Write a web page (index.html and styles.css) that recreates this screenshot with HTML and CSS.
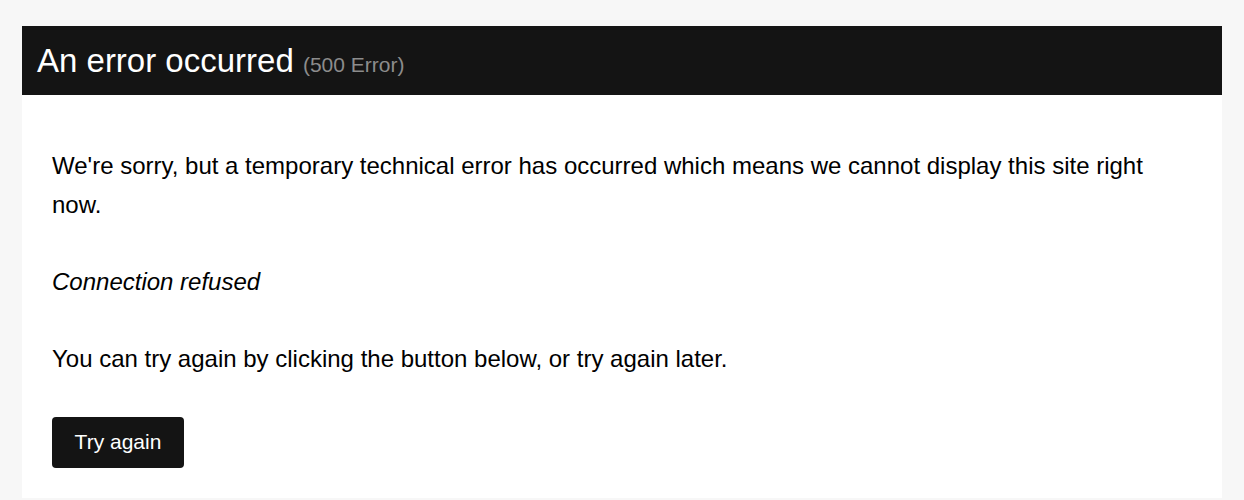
FILE: index.html
```html
<!DOCTYPE html>
<html lang="en">
<head>
<meta charset="utf-8">
<title>An error occurred</title>
<link rel="stylesheet" href="styles.css">
</head>
<body>
<div class="page">
  <header class="head">
    <h1 class="title">An error occurred <span class="code">(500 Error)</span></h1>
  </header>
  <main class="content">
    <p class="para">We're sorry, but a temporary technical error has occurred which means we cannot display this site right now.</p>
    <p class="para"><em>Connection refused</em></p>
    <p class="para">You can try again by clicking the button below, or try again later.</p>
    <button class="btn" type="button">Try again</button>
  </main>
</div>
</body>
</html>
```

FILE: styles.css
```css
html, body {
  margin: 0;
  padding: 0;
  background: #f7f7f7;
  font-family: "Liberation Sans", Arial, sans-serif;
  color: #000;
}
.page {
  max-width: 1200px;
  margin: 26px auto 0;
}
.head {
  background: #141414;
  height: 69px;
  padding: 0 15px;
  display: flex;
  align-items: center;
}
.title {
  margin: 0;
  font-weight: normal;
  font-size: 33px;
  line-height: 1;
  color: #fff;
}
.code {
  font-size: 21px;
  color: #8c8c8c;
}
.content {
  background: #fff;
  padding: 52px 30px 30px;
}
.para {
  margin: 0 0 38.5px;
  font-size: 24px;
  line-height: 38.5px;
}
.btn {
  display: block;
  background: #141414;
  color: #fff;
  border: 0;
  border-radius: 4px;
  font-family: inherit;
  font-size: 21px;
  height: 51px;
  width: 132px;
  padding: 0;
  cursor: pointer;
}
```
